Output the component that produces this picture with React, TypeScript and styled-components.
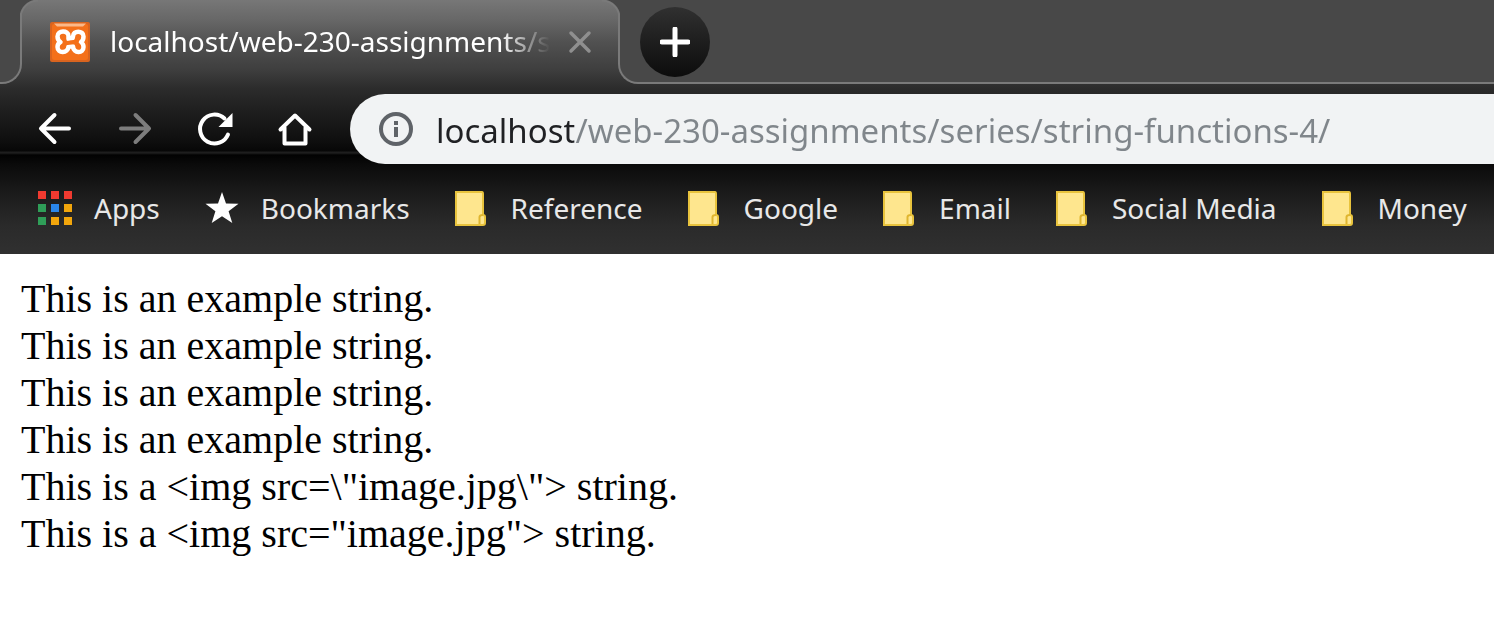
import React from "react";
import styled, { createGlobalStyle } from "styled-components";

const GlobalStyle = createGlobalStyle`
  * { box-sizing: border-box; }
  body { margin: 0; background: #fff; }
  button, input { font: inherit; border: 0; padding: 0; margin: 0; background: none; }
`;

const uiFont = `"Noto Sans", "Open Sans", sans-serif`;
const stripColor = "#484848";
const edgeColor = "#7a7a7a";

const Chrome = styled.header`
  display: flex;
  flex-direction: column;
  overflow: hidden;
  font-family: ${uiFont};
  background: linear-gradient(
    #777 0,
    #676767 20px,
    #515151 42px,
    #3e3e3e 70px,
    #2c2c2c 88px,
    #1f1f1f 110px,
    #0f0f0f 140px,
    #070707 151px,
    #1e1e1e 152px,
    #1e1e1e 153px,
    #020202 155px,
    #0b0b0b 165px,
    #1c1c1c 195px,
    #2a2a2a 225px,
    #303030 253px
  );
`;

const TabStrip = styled.div`
  display: flex;
  height: 84px;
`;

const StripSide = styled.div<{ $side: "left" | "right" }>`
  position: relative;
  display: flex;
  align-items: flex-start;
  flex: ${(p) => (p.$side === "left" ? "0 0 22px" : "1")};
  padding: ${(p) => (p.$side === "left" ? "0" : "7px 20px 0")};
  background: ${stripColor};
  border-bottom: 2px solid ${edgeColor};
  ${(p) =>
    p.$side === "left"
      ? `border-right: 2px solid ${edgeColor}; border-bottom-right-radius: 20px;`
      : `border-left: 2px solid ${edgeColor}; border-bottom-left-radius: 20px;`}

  /* rounded top corner of the active tab */
  &::after {
    content: "";
    position: absolute;
    top: 0;
    ${(p) => (p.$side === "left" ? "right: -18px;" : "left: -18px;")}
    width: 18px;
    height: 18px;
    background: radial-gradient(
      circle at ${(p) => (p.$side === "left" ? "100%" : "0")} 100%,
      transparent 16px,
      ${edgeColor} 17px,
      ${edgeColor} 18px,
      ${stripColor} 19px
    );
  }
`;

const Tab = styled.div`
  display: flex;
  align-items: center;
  flex: 0 1 596px;
  min-width: 0;
  padding: 0 26px 0 28px;
`;

const TabTitle = styled.span`
  flex: 1;
  min-width: 0;
  margin-left: 20px;
  overflow: hidden;
  white-space: nowrap;
  font-size: 28px;
  line-height: 40px;
  padding-bottom: 2px;
  color: #fff;
  mask-image: linear-gradient(to right, #000 calc(100% - 50px), transparent);
`;

const IconButton = styled.button`
  display: flex;
  align-items: center;
  justify-content: center;
  flex: none;
  width: 40px;
  height: 40px;
`;

const CloseButton = styled(IconButton)`
  width: 24px;
  margin-left: 18px;
`;

const NewTabButton = styled(IconButton)`
  width: 70px;
  height: 70px;
  border-radius: 50%;
  background: linear-gradient(#303030, #0c0c0c);
`;

const Toolbar = styled.div`
  display: flex;
  align-items: center;
  gap: 40px;
  height: 80px;
  padding: 10px 0 0 35px;
`;

const AddressBar = styled.label`
  display: flex;
  align-items: center;
  flex: 1;
  min-width: 0;
  height: 70px;
  margin-left: -5px;
  padding-left: 28px;
  gap: 22px;
  border-radius: 35px 0 0 35px;
  background: #f1f3f4;
`;

const AddressInput = styled.input`
  flex: 1;
  min-width: 0;
  height: 50px;
  padding-top: 2px;
  font-size: 33px;
  color: transparent;
  caret-color: #202124;
  background: linear-gradient(to right, #202124 138px, #80868b 138px);
  background-clip: text;
  -webkit-background-clip: text;
`;

const BookmarksBar = styled.nav`
  display: flex;
  align-items: center;
  gap: 42px;
  height: 90px;
  padding: 0 0 2px 35px;
`;

const Bookmark = styled.a`
  display: flex;
  align-items: center;
  gap: 19px;
  flex: none;
  font-size: 28px;
  line-height: 40px;
  color: #e8e8e8;
  text-decoration: none;
  white-space: nowrap;
`;

const BookmarkIcon = styled.span`
  display: flex;
  justify-content: center;
  width: 40px;
`;

const Page = styled.main`
  padding: 21px;
  font-family: "Liberation Serif", "Times New Roman", serif;
  font-size: 40px;
  line-height: 47px;
  color: #000;
`;

const Line = styled.p`
  margin: 0;
`;

const XamppIcon = () => (
  <svg width="40" height="40" viewBox="0 0 40 40" aria-hidden="true">
    <rect width="40" height="40" rx="2" fill="#d9641f" />
    <rect x="2" y="2" width="36" height="36" rx="2" fill="#f4701a" />
    <path d="M4 1.500H36L33 4.500H7Z" fill="#fbb98a" />
    <path
      d="M18.500 17V14C18.500 8 7.500 8 7.500 14.500C7.500 18 9 19 10.500 20C8.500 21 7.500 22.500 7.500 25C7.500 32 18 31.500 18.500 24.500H23C23.500 31.500 33.500 32 33.500 25C33.500 22.500 32.500 21 31 20C32.500 19 33.500 17.500 33.500 14.500C33.500 8 23 8 23 14.500L22.500 16.500H18.500"
      fill="none"
      stroke="#fff"
      strokeWidth="4.500"
      strokeLinejoin="round"
      strokeLinecap="round"
    />
    <path d="M14 21.500L27 19.500" stroke="#f4701a" strokeWidth="4" />
  </svg>
);

const CloseIcon = () => (
  <svg width="24" height="24" viewBox="0 0 24 24" aria-hidden="true">
    <path d="M3 3L21 21M21 3L3 21" stroke="#8f8f8f" strokeWidth="3.500" strokeLinecap="round" />
  </svg>
);

const PlusIcon = () => (
  <svg width="30" height="30" viewBox="0 0 30 30" aria-hidden="true">
    <path d="M15 2V28M2 15H28" stroke="#fff" strokeWidth="5" strokeLinecap="round" />
  </svg>
);

const ArrowIcon = ({ forward = false }: { forward?: boolean }) => (
  <svg width="40" height="40" viewBox="0 0 40 40" aria-hidden="true">
    <path
      d={forward ? "M6 19.500H34M20.500 6L34 19.500L20.500 33" : "M34 19.500H6M19.500 6L6 19.500L19.500 33"}
      fill="none"
      stroke={forward ? "#7d7d7d" : "#fff"}
      strokeWidth="4"
      strokeLinecap="round"
      strokeLinejoin="round"
    />
  </svg>
);

const ReloadIcon = () => (
  <svg width="40" height="40" viewBox="0 0 40 40" aria-hidden="true">
    <path d="M33 25.500A14.500 14.500 0 1 1 29.500 9.500" fill="none" stroke="#fff" strokeWidth="4" strokeLinecap="round" />
    <path d="M37.500 4V18H23.500Z" fill="#fff" />
  </svg>
);

const HomeIcon = () => (
  <svg width="40" height="40" viewBox="0 0 40 40" aria-hidden="true">
    <path
      d="M5.500 20.500L20 6.500L34.500 20.500M9.500 18.500V34.500H30.500V18.500"
      fill="none"
      stroke="#fff"
      strokeWidth="4"
      strokeLinecap="round"
      strokeLinejoin="round"
    />
  </svg>
);

const InfoIcon = () => (
  <svg width="36" height="36" viewBox="0 0 36 36" aria-hidden="true">
    <circle cx="18" cy="18" r="15" fill="none" stroke="#5f6368" strokeWidth="4" />
    <path d="M18 16V26M18 10V14" stroke="#5f6368" strokeWidth="4" />
  </svg>
);

const appColors = [
  "#f03a30", "#f03a30", "#f03a30",
  "#2f9e58", "#2a86ea", "#f2a60c",
  "#2f9e58", "#f2a60c", "#f2a60c",
];

const AppsIcon = () => (
  <svg width="34" height="34" viewBox="0 0 34 34" aria-hidden="true">
    {appColors.map((color, i) => (
      <rect key={i} x={(i % 3) * 13} y={Math.floor(i / 3) * 13} width="8" height="8" fill={color} />
    ))}
  </svg>
);

const StarIcon = () => (
  <svg width="34" height="34" viewBox="0 0 34 34" aria-hidden="true">
    <path d="M17 1L21 12.500L33.500 12.800L23.600 20.300L27.300 32L17 25.200L6.700 32L10.400 20.300L.5 12.800L13 12.500Z" fill="#fff" />
  </svg>
);

const FolderIcon = () => (
  <svg width="34" height="36" viewBox="0 0 34 36" aria-hidden="true">
    <path d="M1 2H27Q28 2 28 4V25Q30 25 30 27V33Q30 35 28 35H1Z" fill="#fee68e" stroke="#e8c33d" strokeWidth="2" />
    <path d="M24.500 34V27Q24.500 25 28 25" fill="none" stroke="#dfb52f" strokeWidth="2" />
  </svg>
);

const bookmarks = [
  { label: "Apps", Icon: AppsIcon },
  { label: "Bookmarks", Icon: StarIcon },
  { label: "Reference", Icon: FolderIcon },
  { label: "Google", Icon: FolderIcon },
  { label: "Email", Icon: FolderIcon },
  { label: "Social Media", Icon: FolderIcon },
  { label: "Money", Icon: FolderIcon },
];

const lines = [
  "This is an example string.",
  "This is an example string.",
  "This is an example string.",
  "This is an example string.",
  'This is a <img src=\\"image.jpg\\"> string.',
  'This is a <img src="image.jpg"> string.',
];

export default function App() {
  return (
    <>
      <GlobalStyle />
      <Chrome>
        <TabStrip>
          <StripSide $side="left" />
          <Tab>
            <XamppIcon />
            <TabTitle>localhost/web-230-assignments/s</TabTitle>
            <CloseButton aria-label="Close tab"><CloseIcon /></CloseButton>
          </Tab>
          <StripSide $side="right">
            <NewTabButton aria-label="New tab"><PlusIcon /></NewTabButton>
          </StripSide>
        </TabStrip>
        <Toolbar>
          <IconButton aria-label="Back"><ArrowIcon /></IconButton>
          <IconButton aria-label="Forward" disabled><ArrowIcon forward /></IconButton>
          <IconButton aria-label="Reload"><ReloadIcon /></IconButton>
          <IconButton aria-label="Home"><HomeIcon /></IconButton>
          <AddressBar>
            <InfoIcon />
            <AddressInput
              type="text"
              aria-label="Address"
              defaultValue="localhost/web-230-assignments/series/string-functions-4/"
            />
          </AddressBar>
        </Toolbar>
        <BookmarksBar aria-label="Bookmarks">
          {bookmarks.map(({ label, Icon }) => (
            <Bookmark key={label} href="#">
              <BookmarkIcon><Icon /></BookmarkIcon>
              {label}
            </Bookmark>
          ))}
        </BookmarksBar>
      </Chrome>
      <Page>
        {lines.map((text, i) => (
          <Line key={i}>{text}</Line>
        ))}
      </Page>
    </>
  );
}
